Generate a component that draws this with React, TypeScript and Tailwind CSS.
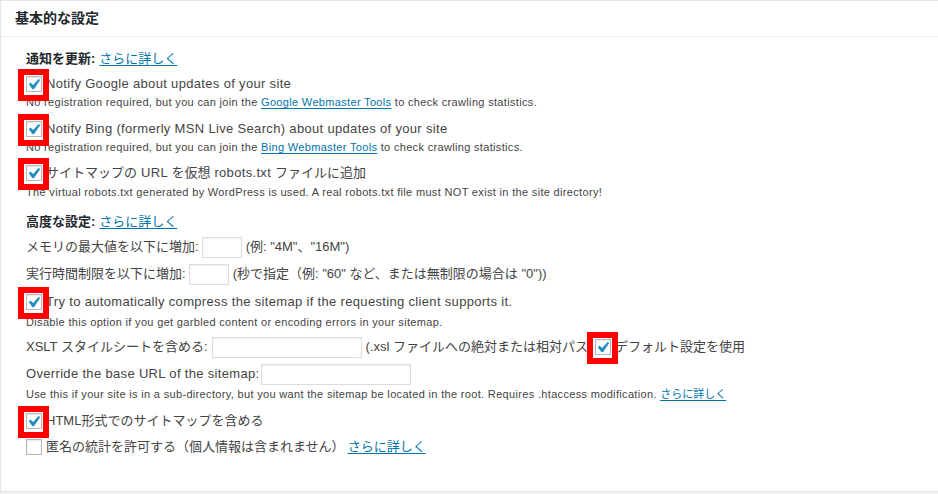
import React from "react";

const FONT = "font-['Liberation_Sans',Arial,'Noto_Sans_CJK_JP',sans-serif]";

function Checkbox({ checked = false, mark = false }: { checked?: boolean; mark?: boolean }) {
  return (
    <span className="relative inline-block w-4 h-4 shrink-0 border border-[#b4b9be] bg-white shadow-[inset_0_1px_2px_rgba(0,0,0,0.1)]">
      {checked && (
        <svg className="absolute left-[-4px] top-[-3px]" width="21" height="21" viewBox="0 0 20 20">
          <path d="M14.83 4.89l1.34.94-5.81 8.38H9.02L5.78 9.67l1.34-1.25 2.57 2.4z" fill="#1e8cbe" stroke="#1e8cbe" strokeWidth="0.4" />
        </svg>
      )}
      {mark && (
        <span className="absolute left-[-9px] top-[-8px] z-10 w-[31px] h-[32px] border-[6px] border-[#ff0000]" />
      )}
    </span>
  );
}

function Link({ children, latin = false }: { children: React.ReactNode; latin?: boolean }) {
  return (
    <a className={`text-[#0073aa] underline underline-offset-2 ${latin ? "tracking-[0.33px]" : "tracking-normal"}`} href="#">
      {children}
    </a>
  );
}

function CheckRow({ children, mt, latin = false }: { children: React.ReactNode; mt: string; latin?: boolean }) {
  return (
    <div className={`flex items-center h-[20px] gap-[4px] text-[13px] text-[#444] ${mt}`}>
      <Checkbox checked mark />
      <span className={`whitespace-nowrap ${latin ? "tracking-[0.33px]" : ""}`}>{children}</span>
    </div>
  );
}

function Desc({ children, mt }: { children: React.ReactNode; mt: string }) {
  return (
    <div className={`h-[14px] leading-[14px] text-[11px] text-[#444] whitespace-nowrap tracking-[0.33px] ${mt}`}>{children}</div>
  );
}

function Input({ w }: { w: string }) {
  return (
    <span className={`inline-block h-[21px] ${w} border border-[#ddd] bg-white shadow-[inset_0_1px_2px_rgba(0,0,0,0.07)] shrink-0`} />
  );
}

export default function App() {
  return (
    <div className={`w-[938px] h-[494px] overflow-hidden bg-[#f1f1f1] ${FONT}`}>
      <div className="w-[960px] h-[492px] bg-white border border-[#e5e5e5]">
        <div className="h-[36px] border-b border-[#eee] flex items-center pl-[14px]">
          <h3 className="text-[14px] font-bold text-[#23282d]">基本的な設定</h3>
        </div>
        <div className="pl-[25px]">
          <div className="mt-[12px] h-[20px] flex items-center text-[13px] text-[#444]">
            <span className="font-bold text-[#23282d]">通知を更新:</span>
            <span className="ml-[4px]"><Link>さらに詳しく</Link></span>
          </div>
          <CheckRow mt="mt-[5px]" latin>Notify Google about updates of your site</CheckRow>
          <Desc mt="mt-[1px]">
            No registration required, but you can join the <Link latin>Google Webmaster Tools</Link> to check crawling statistics.
          </Desc>
          <CheckRow mt="mt-[10px]" latin>Notify Bing (formerly MSN Live Search) about updates of your site</CheckRow>
          <Desc mt="mt-[1px]">
            No registration required, but you can join the <Link latin>Bing Webmaster Tools</Link> to check crawling statistics.
          </Desc>
          <CheckRow mt="mt-[9px]">
            サイトマップの<span className="tracking-[0.33px]"> URL </span>を仮想<span className="tracking-[0.33px]"> robots.txt </span>ファイルに追加
          </CheckRow>
          <Desc mt="mt-[2px]">
            The virtual robots.txt generated by WordPress is used. A real robots.txt file must NOT exist in the site directory!
          </Desc>

          <div className="mt-[13px] h-[20px] flex items-center text-[13px] text-[#444]">
            <span className="font-bold text-[#23282d]">高度な設定:</span>
            <span className="ml-[4px]"><Link>さらに詳しく</Link></span>
          </div>
          <div className="mt-[4px] h-[22px] flex items-center text-[13px] text-[#444] whitespace-nowrap">
            <span>メモリの最大値を以下に増加:</span>
            <span className="ml-[3px] flex"><Input w="w-[40px]" /></span>
            <span className="ml-[4px]">(例: "4M"、"16M")</span>
          </div>
          <div className="mt-[5px] h-[22px] flex items-center text-[13px] text-[#444] whitespace-nowrap">
            <span>実行時間制限を以下に増加:</span>
            <span className="ml-[3px] flex"><Input w="w-[40px]" /></span>
            <span className="ml-[4px]">(秒で指定（例: "60" など、または無制限の場合は "0"))</span>
          </div>
          <CheckRow mt="mt-[7px]" latin>Try to automatically compress the sitemap if the requesting client supports it.</CheckRow>
          <Desc mt="mt-[3px]">Disable this option if you get garbled content or encoding errors in your sitemap.</Desc>
          <div className="mt-[7px] h-[22px] flex items-center text-[13px] text-[#444] whitespace-nowrap">
            <span>XSLT スタイルシートを含める:</span>
            <span className="ml-[4px] flex"><Input w="w-[150px]" /></span>
            <span className="ml-[4px]">(.xsl ファイルへの絶対または相対パス</span>
            <span className="ml-[7px] flex"><Checkbox checked mark /></span>
            <span className="ml-[4px]">デフォルト設定を使用</span>
          </div>
          <div className="mt-[5px] h-[22px] flex items-center text-[13px] text-[#444] whitespace-nowrap">
            <span className="tracking-[0.33px]">Override the base URL of the sitemap:</span>
            <span className="ml-[1px] flex"><Input w="w-[150px]" /></span>
          </div>
          <Desc mt="mt-[2px]">
            Use this if your site is in a sub-directory, but you want the sitemap be located in the root. Requires .htaccess modification. <Link>さらに詳しく</Link>
          </Desc>
          <CheckRow mt="mt-[10px]">HTML形式でのサイトマップを含める</CheckRow>
          <div className="mt-[6px] flex items-center h-[20px] gap-[4px] text-[13px] text-[#444] whitespace-nowrap">
            <Checkbox />
            <span>匿名の統計を許可する（個人情報は含まれません）</span>
            <span className="ml-[-1px]"><Link>さらに詳しく</Link></span>
          </div>
        </div>
      </div>
    </div>
  );
}
